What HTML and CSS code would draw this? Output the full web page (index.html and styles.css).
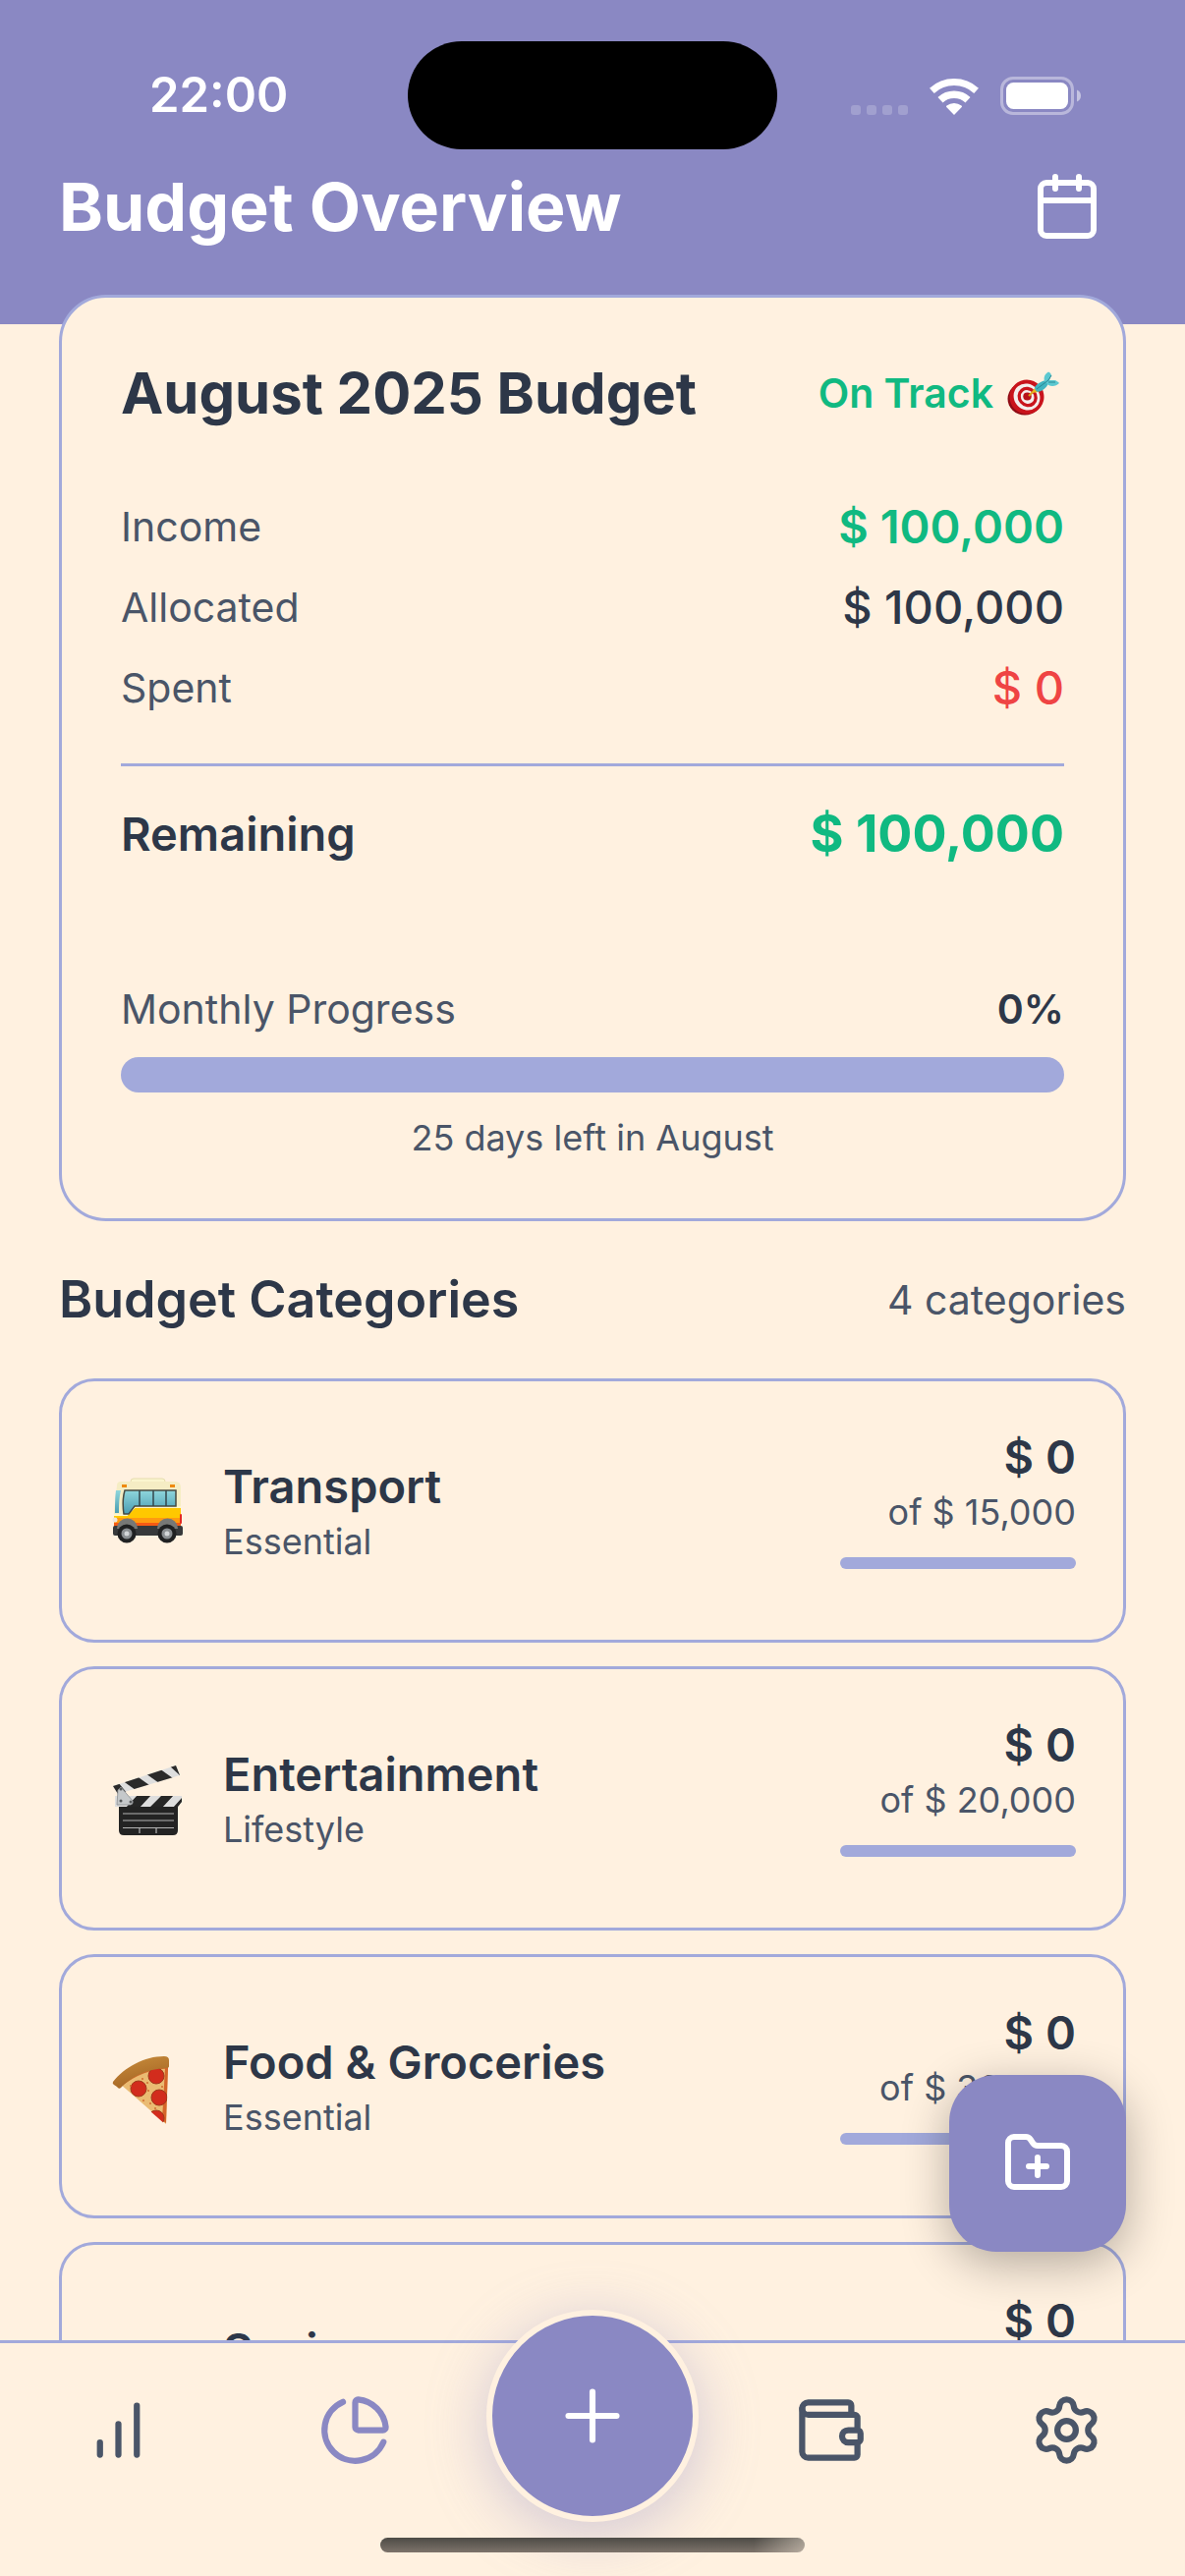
FILE: index.html
```html
<!DOCTYPE html>
<html lang="en">
<head>
<meta charset="utf-8">
<meta name="viewport" content="width=device-width, initial-scale=1">
<title>Budget Overview</title>
<link rel="stylesheet" href="styles.css">
</head>
<body>
<div class="app">
  <header class="header">
    <div class="status">
      <span class="status-time">22:00</span>
      <span class="island"></span>
      <span class="status-icons">
        <svg class="signal" viewBox="0 0 58 10" aria-hidden="true"><g fill="#fff" opacity=".2"><rect width="10" height="10" rx="3"/><rect x="16" width="10" height="10" rx="3"/><rect x="32" width="10" height="10" rx="3"/><rect x="48" width="10" height="10" rx="3"/></g></svg>
        <svg class="wifi" viewBox="0 0 50 37" aria-hidden="true"><g fill="none" stroke="#fff"><path stroke-width="7" d="M2.400 12.300A33.500 33.500 0 0 1 47.600 12.300"/><path stroke-width="7.500" d="M11 21.700A20.700 20.700 0 0 1 39 21.700"/></g><path fill="#fff" d="M25 37L17 28.700Q17 28 17.500 27.600A12 12 0 0 1 32.500 27.600Q33 28 33 28.700z"/></svg>
        <svg class="battery" viewBox="0 0 82 39" aria-hidden="true"><rect x="1.500" y="1.500" width="72" height="36" rx="11.500" fill="none" stroke="#fff" stroke-opacity=".4" stroke-width="3"/><rect x="6" y="6" width="63" height="27" rx="7.500" fill="#fff"/><path d="M78 13.500c2.500 1 4 3.300 4 6s-1.500 5-4 6z" fill="#fff" opacity=".5"/></svg>
      </span>
    </div>
    <div class="title-row">
      <h1 class="title">Budget Overview</h1>
      <button class="calendar" type="button" aria-label="Choose month">
        <svg class="icon" viewBox="0 0 24 24" aria-hidden="true"><path d="M8 2v4M16 2v4M3 10h18"/><rect x="3" y="4" width="18" height="18" rx="2"/></svg>
      </button>
    </div>
  </header>

  <main class="main">
    <section class="summary">
      <div class="summary-head">
        <h2 class="summary-title">August 2025 Budget</h2>
        <span class="track">On Track
          <svg class="target" viewBox="0 0 54 45" role="img" aria-label="Target">
            <ellipse cx="18" cy="28" rx="17.500" ry="16.500" fill="#8f0d16"/>
            <ellipse cx="20" cy="26" rx="17.500" ry="17.500" transform="rotate(35 20 26)" fill="#c9141c"/>
            <ellipse cx="20" cy="26" rx="14" ry="13" transform="rotate(50 20 26)" fill="#f4eeec"/>
            <ellipse cx="20.500" cy="25.500" rx="10.600" ry="9.800" transform="rotate(50 20 26)" fill="#c9141c"/>
            <ellipse cx="20.500" cy="25.500" rx="7.200" ry="6.600" transform="rotate(50 20 26)" fill="#f4eeec"/>
            <ellipse cx="20.500" cy="25.500" rx="4.200" ry="4" fill="#b8121a"/>
            <path d="M22 25l6-6" stroke="#d7a31c" stroke-width="2"/>
            <path d="M25 22l3-5 4 4z" fill="#e8b920"/>
            <path d="M28 16c3-4 7-6 11-7l1 2 2 1c-2 5-6 8-11 9-2-1-3-3-3-5z" fill="#40b4c0"/>
            <path d="M38 10c-1-4 0-7 4-9.500 2 1 3 2 3 4L43 9l5 0c2 0 4 2 5 3-3 3-7 4-11 2z" fill="#5cc8d0"/>
            <path d="M30 18L42 9l3-5M42 11h7" stroke="#2a8794" stroke-width="1" fill="none"/>
          </svg>
        </span>
      </div>
      <dl class="rows">
        <div class="row"><dt>Income</dt><dd class="good">$ 100,000</dd></div>
        <div class="row"><dt>Allocated</dt><dd>$ 100,000</dd></div>
        <div class="row"><dt>Spent</dt><dd class="bad">$ 0</dd></div>
        <div class="row total"><dt>Remaining</dt><dd class="good">$ 100,000</dd></div>
      </dl>
      <div class="progress-head"><span id="progress-label">Monthly Progress</span><strong>0%</strong></div>
      <div class="bar" role="progressbar" aria-labelledby="progress-label" aria-valuenow="0"></div>
      <p class="days">25 days left in August</p>
    </section>

    <div class="section-head">
      <h2 class="section-title">Budget Categories</h2>
      <span class="count">4 categories</span>
    </div>

    <ul class="categories">
      <li class="category">
        <svg class="emoji" viewBox="0 0 78 78" role="img" aria-label="Bus">
          <defs><linearGradient id="glass" x2="0" y2="1"><stop offset="0" stop-color="#8fd6dc"/><stop offset="1" stop-color="#4a9db3"/></linearGradient></defs>
          <rect x="22" y="6" width="35" height="8" rx="3" fill="#fbf6cf" stroke="#e6dcae"/>
          <path d="M8 13q0-4 4-4h55q6 0 6 6v42H5V40z" fill="#f5edc4"/>
          <path d="M5 44h13l8-8h47v22H5z" fill="#ffc800"/>
          <path d="M5 48h68v9H5z" fill="#f65a14"/><path d="M5 46h68v5H5z" fill="#ff9a10"/>
          <path d="M5 43h13l8-8h47" fill="none" stroke="#fff6c8" stroke-width="2"/>
          <path d="M16 18h52v16H26l-6 8h-5q-2-14 1-24z" fill="url(#glass)" stroke="#474a42" stroke-width="1.500"/>
          <path d="M31 18v16M45 18v16M58 18v16" stroke="#34474c" stroke-width="1.500"/>
          <path d="M7 18h5c-2 8-2 16-2 23H6c0-8 0-16 1-23z" fill="url(#glass)"/>
          <rect x="13" y="12" width="5" height="3" fill="#ee8a10"/><rect x="62" y="12" width="5" height="3" fill="#ee8a10"/>
          <rect x="72" y="42" width="2" height="10" rx="1" fill="#e32a22"/><circle cx="6" cy="48" r="2.500" fill="#eee6dd"/>
          <rect x="4" y="54" width="71" height="10" rx="2" fill="#37393b"/>
          <path d="M8 57a10 10 0 0 1 21 0M49 57a10 10 0 0 1 21 0" fill="#777876"/>
          <circle cx="18" cy="62" r="9.500" fill="#202122"/><circle cx="59" cy="62" r="9.500" fill="#202122"/>
          <circle cx="18" cy="62" r="5.500" fill="#8b8f92"/><circle cx="59" cy="62" r="5.500" fill="#8b8f92"/>
          <circle cx="18" cy="62" r="2.500" fill="#d3d6d8"/><circle cx="59" cy="62" r="2.500" fill="#d3d6d8"/>
        </svg>
        <div class="category-info"><h3 class="name">Transport</h3><p class="note">Essential</p></div>
        <div class="category-amount"><strong class="spent">$ 0</strong><span class="note">of $ 15,000</span><div class="mini-bar"></div></div>
      </li>
      <li class="category">
        <svg class="emoji" viewBox="0 0 78 78" role="img" aria-label="Clapper board">
          <defs><clipPath id="arm"><path d="M4 26L68 5l4 10L9 34z"/></clipPath><clipPath id="slate"><path d="M6 36h68v6l-4 5H6z"/></clipPath></defs>
          <g clip-path="url(#arm)"><path d="M0 0h78v40H0z" fill="#dedede"/><path d="M1 22l8 0 10 12H5zM13 20l14-5 14 10-14 5zM37 13l14-5 14 10-14 5zM60 4l8-3 10 11-6 3z" fill="#2a2a2a"/></g>
          <path d="M10 44h60v27q0 5-5 5H15q-5 0-5-5z" fill="#232323"/>
          <g clip-path="url(#slate)"><path d="M0 34h78v16H0z" fill="#dedede"/><path d="M29 35h14L31 48H17zM54 35h12L54 48H41zM75 35v13H65l10-11z" fill="#262626"/></g>
          <path d="M9 30l3-3 12 14q1 3-2 4H8z" fill="#c5c8ca" stroke="#8b8e90" stroke-width=".8"/><circle cx="12" cy="29" r="1.500" fill="#55585a"/><circle cx="12" cy="41" r="1.500" fill="#55585a"/><circle cx="22" cy="42" r="1.500" fill="#55585a"/>
          <path d="M14 54h52M14 61h52M14 68.500h52M31 69v5M48 69v5" stroke="#b4b4b4" stroke-width="1.200"/>
        </svg>
        <div class="category-info"><h3 class="name">Entertainment</h3><p class="note">Lifestyle</p></div>
        <div class="category-amount"><strong class="spent">$ 0</strong><span class="note">of $ 20,000</span><div class="mini-bar"></div></div>
      </li>
      <li class="category">
        <svg class="emoji" viewBox="0 0 78 78" role="img" aria-label="Pizza slice">
          <defs><clipPath id="slice"><path d="M8 34C24 20 40 15 61 14L58 78z"/></clipPath><linearGradient id="crust" x2=".4" y2="1"><stop offset="0" stop-color="#c98e3c"/><stop offset="1" stop-color="#a56524"/></linearGradient></defs>
          <path d="M10 35C26 22 42 17 60 16L58 77z" fill="#eabb72"/>
          <path d="M12 37C28 25 42 20 60 19" fill="none" stroke="#cf6a2c" stroke-width="3"/>
          <path d="M57 20h3l-2 56-4-3z" fill="#d5652a"/>
          <g clip-path="url(#slice)"><g fill="#d22c1d" stroke="#9f3a1c" stroke-width="1"><circle cx="48" cy="28" r="8"/><circle cx="30" cy="41" r="8"/><circle cx="51" cy="50" r="8"/><circle cx="48" cy="71" r="8"/></g>
          <g fill="#cf6d30"><circle cx="39" cy="35" r="1"/><circle cx="40" cy="43" r="1"/><circle cx="42" cy="56" r="1"/><circle cx="35" cy="53" r="1"/><circle cx="54" cy="39" r="1"/><circle cx="47" cy="61" r="1"/><circle cx="22" cy="38" r="1"/><circle cx="34" cy="31" r="1"/></g></g>
          <path d="M4 34C16 19 36 8 56 8q5 0 5 4v6q0 2-3 2C38 21 22 29 12 40q-2 2-4-1l-3-2q-2-1-1-3z" fill="url(#crust)"/>
        </svg>
        <div class="category-info"><h3 class="name">Food &amp; Groceries</h3><p class="note">Essential</p></div>
        <div class="category-amount"><strong class="spent">$ 0</strong><span class="note">of $ 30,000</span><div class="mini-bar"></div></div>
      </li>
      <li class="category">
        <svg class="emoji" viewBox="0 0 78 78" role="img" aria-label="Money bag"><path d="M28 8h22l-6 14c16 8 24 22 24 34 0 12-10 16-29 16S10 68 10 56c0-12 8-26 24-34z" fill="#d9a441"/></svg>
        <div class="category-info"><h3 class="name">Savings</h3><p class="note">Essential</p></div>
        <div class="category-amount"><strong class="spent">$ 0</strong><span class="note">of $ 35,000</span><div class="mini-bar"></div></div>
      </li>
    </ul>
  </main>

  <footer class="footer">
    <button class="fab" type="button" aria-label="Add category">
      <svg class="icon" viewBox="0 0 24 24" aria-hidden="true"><path d="M12 10v6M9 13h6"/><path d="M20 20a2 2 0 0 0 2-2V8a2 2 0 0 0-2-2h-7.900a2 2 0 0 1-1.690-.9L9.600 3.900A2 2 0 0 0 7.930 3H4a2 2 0 0 0-2 2v13a2 2 0 0 0 2 2Z"/></svg>
    </button>
    <nav class="tabs">
      <a class="tab" href="#stats" aria-label="Statistics"><svg class="icon tab-icon" viewBox="0 0 24 24" aria-hidden="true"><path d="M12 20V10M18 20V4M6 20v-4"/></svg></a>
      <a class="tab current" href="#budget" aria-label="Budget"><svg class="icon tab-icon" viewBox="0 0 24 24" aria-hidden="true"><path d="M21 12c.552 0 1.005-.449.950-.998a10 10 0 0 0-8.953-8.951c-.550-.055-.998.398-.998.950v8a1 1 0 0 0 1 1z"/><path d="M21.210 15.890A10 10 0 1 1 8 2.830"/></svg></a>
      <button class="add" type="button" aria-label="Add"><svg class="icon add-icon" viewBox="0 0 24 24" aria-hidden="true"><path d="M5 12h14M12 5v14"/></svg></button>
      <a class="tab" href="#wallet" aria-label="Wallet"><svg class="icon tab-icon" viewBox="0 0 24 24" aria-hidden="true"><path d="M19 7V4a1 1 0 0 0-1-1H5a2 2 0 0 0 0 4h15a1 1 0 0 1 1 1v4h-3a2 2 0 0 0 0 4h3a1 1 0 0 0 1-1v-2a1 1 0 0 0-1-1"/><path d="M3 5v14a2 2 0 0 0 2 2h15a1 1 0 0 0 1-1v-4"/></svg></a>
      <a class="tab" href="#settings" aria-label="Settings"><svg class="icon tab-icon" viewBox="0 0 24 24" aria-hidden="true"><path d="M9.671 4.136a2.340 2.340 0 0 1 4.659 0 2.340 2.340 0 0 0 3.319 1.915 2.340 2.340 0 0 1 2.330 4.033 2.340 2.340 0 0 0 0 3.831 2.340 2.340 0 0 1-2.330 4.033 2.340 2.340 0 0 0-3.319 1.915 2.340 2.340 0 0 1-4.659 0 2.340 2.340 0 0 0-3.320-1.915 2.340 2.340 0 0 1-2.330-4.033 2.340 2.340 0 0 0 0-3.831A2.340 2.340 0 0 1 6.350 6.051a2.340 2.340 0 0 0 3.319-1.915"/><circle cx="12" cy="12" r="3"/></svg></a>
    </nav>
    <div class="home"></div>
  </footer>
</div>
</body>
</html>
```
FILE: styles.css
```css
:root {
  --purple: #8a88c3;
  --lavender: #a2a9db;
  --cream: #fff1e0;
  --ink: #2d3748;
  --slate: #4a5568;
  --green: #10b981;
  --red: #ef4444;
}

* { box-sizing: border-box; margin: 0; padding: 0; }

body {
  background: var(--cream);
  color: var(--ink);
  font-family: Inter, "Noto Sans", sans-serif;
  font-size: 41px;
  line-height: 50px;
}

button { border: 0; background: none; color: inherit; font: inherit; cursor: pointer; }
ul { list-style: none; }

.app { height: 100vh; display: flex; flex-direction: column; }

.icon {
  display: block;
  width: 72px;
  height: 72px;
  fill: none;
  stroke: currentColor;
  stroke-width: 2;
  stroke-linecap: round;
  stroke-linejoin: round;
}

/* Header */
.header { background: var(--purple); color: #fff; padding: 42px 60px 80px; }

.status {
  display: grid;
  grid-template-columns: 1fr 376px 1fr;
  align-items: center;
  height: 110px;
}
.status-time { padding-left: 92px; font-size: 49px; font-weight: 600; line-height: 60px; }
.island { height: 110px; border-radius: 55px; background: #000; }
.status-icons { display: flex; justify-content: flex-end; align-items: flex-end; gap: 22px; padding-right: 46px; }
.signal { width: 58px; height: 10px; }
.wifi { width: 50px; height: 37px; }
.battery { width: 82px; height: 39px; }

.title-row { display: flex; justify-content: space-between; align-items: center; padding-top: 18px; }
.title { font-size: 68px; line-height: 80px; font-weight: 700; }
.calendar { padding: 4px 24px; }

/* Scrolling content */
.main {
  position: relative;
  flex: 1;
  min-height: 0;
  margin-top: -30px;
  padding: 0 60px;
  overflow-y: auto;
  scrollbar-width: none;
}

.summary {
  border: 3px solid var(--lavender);
  border-radius: 48px;
  background: var(--cream);
  padding: 60px;
}
.summary-head { display: flex; justify-content: space-between; align-items: center; margin-bottom: 70px; }
.summary-title { font-size: 58px; line-height: 74px; font-weight: 700; }
.track { display: flex; align-items: center; gap: 14px; padding-right: 4px; color: var(--green); font-weight: 600; }
.target { width: 54px; height: 45px; }

.rows { display: grid; gap: 24px; }
.row { display: flex; justify-content: space-between; align-items: center; line-height: 58px; color: var(--slate); }
.row dd { color: var(--ink); font-size: 47px; font-weight: 500; }
.row .good { color: var(--green); font-weight: 600; }
.row .bad { color: var(--red); }
.total { border-top: 3px solid var(--lavender); margin-top: 24px; padding-top: 36px; line-height: 66px; }
.total dt { color: var(--ink); font-size: 47px; font-weight: 600; }
.total .good { font-size: 52px; font-weight: 700; }

.progress-head { display: flex; justify-content: space-between; margin: 120px 0 24px; color: var(--slate); }
.progress-head strong { color: var(--ink); font-weight: 600; }
.bar { height: 36px; border-radius: 18px; background: var(--lavender); }
.days { margin-top: 24px; text-align: center; font-size: 36px; line-height: 44px; color: var(--slate); }

.section-head { display: flex; justify-content: space-between; align-items: center; margin: 48px 0; }
.section-title { font-size: 52px; line-height: 64px; font-weight: 600; }
.count { color: var(--slate); }

.categories { display: grid; gap: 24px; padding-bottom: 24px; }
.category {
  display: flex;
  align-items: center;
  gap: 38px;
  border: 3px solid var(--lavender);
  border-radius: 36px;
  padding: 48px;
}
.emoji { width: 78px; height: 78px; }
.category-info { flex: 1; display: grid; gap: 6px; }
.name, .spent { font-size: 47px; line-height: 57px; font-weight: 600; }
.note { font-size: 36px; line-height: 44px; color: var(--slate); }
.category-amount { display: grid; gap: 6px; width: 240px; text-align: right; }
.mini-bar { height: 12px; margin: 18px 0 24px; border-radius: 6px; background: var(--lavender); }

/* Bottom bar */
.footer { position: relative; border-top: 3px solid var(--lavender); background: var(--cream); }
.fab {
  position: absolute;
  right: 60px;
  bottom: 100%;
  margin-bottom: 93px;
  padding: 54px;
  border-radius: 48px;
  background: var(--purple);
  color: #fff;
  box-shadow: 0 12px 48px rgba(0, 0, 0, 0.3);
}
.tabs { display: grid; grid-template-columns: repeat(5, 1fr); justify-items: center; align-items: center; }
.tab { color: var(--slate); }
.tab.current { color: var(--purple); }
.tab-icon { width: 75px; height: 75px; }
.add {
  margin: -34px 0 -6px;
  padding: 60px;
  border: 6px solid var(--cream);
  border-radius: 50%;
  background: var(--purple);
  color: #fff;
  box-shadow: 0 12px 60px rgba(138, 136, 195, 0.4);
}
.add-icon { width: 84px; height: 84px; stroke-width: 1.75; }
.home {
  position: relative;
  width: 432px;
  height: 15px;
  margin: 22px auto 24px;
  border-radius: 8px;
  background: linear-gradient(to right, transparent 88%, rgba(255, 241, 224, 0.45)), linear-gradient(#4d4b45, #7d736b);
}
```
